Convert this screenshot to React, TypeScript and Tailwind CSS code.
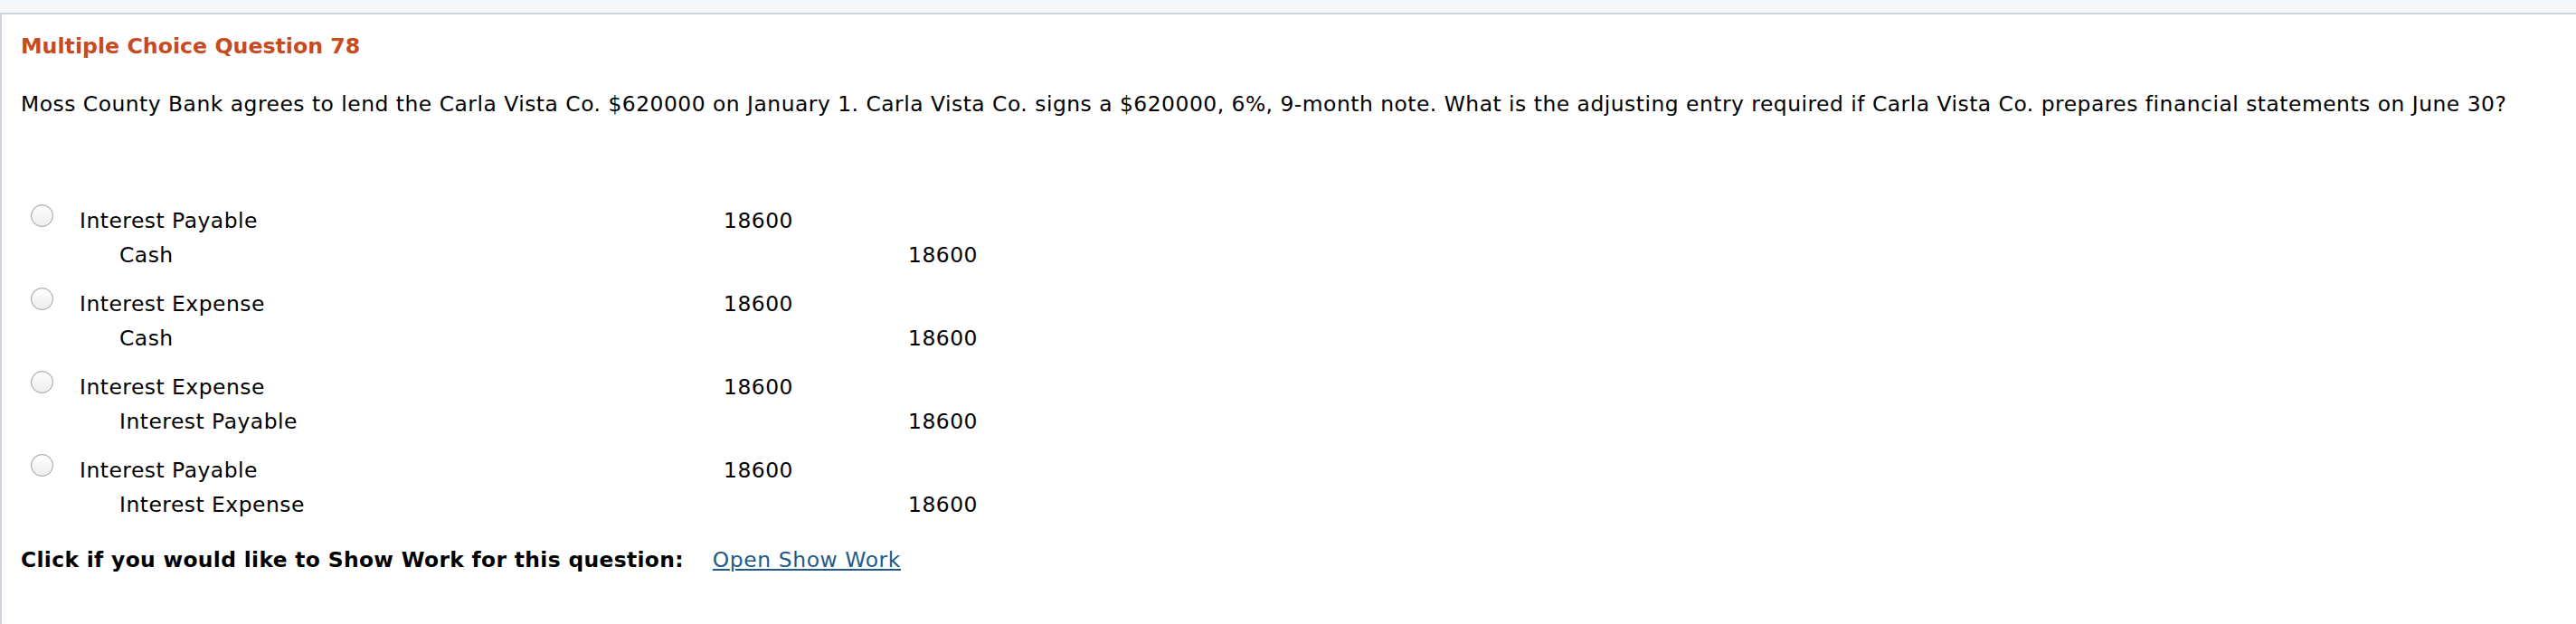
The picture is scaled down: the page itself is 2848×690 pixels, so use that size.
import React from 'react';

const options = [
  { debit: 'Interest Payable', credit: 'Cash' },
  { debit: 'Interest Expense', credit: 'Cash' },
  { debit: 'Interest Expense', credit: 'Interest Payable' },
  { debit: 'Interest Payable', credit: 'Interest Expense' },
];

function Radio() {
  return (
    <span className="block w-[25px] h-[25px] rounded-full border border-[#9f9f9f] bg-gradient-to-b from-white to-[#ececec] shadow-[inset_0_1px_1px_rgba(0,0,0,0.08)]" />
  );
}

export default function App() {
  return (
    <div className="min-h-[690px] bg-white text-black font-['DejaVu_Sans',Verdana,sans-serif]">
      <div className="h-[16px] bg-[#f6f7f9] border-b-2 border-[#ccd4df]" />
      <div className="border-l-2 border-[#ccd4df] pl-[21px] pt-[20px] min-h-[674px]">
        <h2 className="text-[23.7px] leading-[30px] font-bold text-[#c84b1f]">Multiple Choice Question 78</h2>

        <p className="mt-[30px] text-[23.4px] leading-[38px] tracking-[0.5px]">
          Moss County Bank agrees to lend the Carla Vista Co. $620000 on January 1. Carla Vista Co. signs a $620000, 6%, 9-month note. What is the adjusting entry required if Carla Vista Co. prepares financial statements on June 30?
        </p>

        <div className="mt-[91px] flex flex-col gap-[16px] text-[23.4px] leading-[38px] tracking-[0.5px]">
          {options.map((o, i) => (
            <div key={i} className="flex items-start">
              <div className="ml-[11px] w-[54px] pt-[1px]">
                <Radio />
              </div>
              <div>
                <div className="flex">
                  <span className="w-[689px]">{o.debit}</span>
                  <span className="w-[100px] text-right">18600</span>
                </div>
                <div className="flex">
                  <span className="w-[689px] pl-[44px]">{o.credit}</span>
                  <span className="w-[100px]" />
                  <span className="w-[204px] text-right">18600</span>
                </div>
              </div>
            </div>
          ))}
        </div>

        <div className="mt-[23px] flex text-[23.4px] leading-[38px]">
          <span className="font-bold tracking-[0.33px]">Click if you would like to Show Work for this question:</span>
          <a href="#" className="ml-[32px] text-[#215a8a] underline tracking-[0.6px]">Open Show Work</a>
        </div>
      </div>
    </div>
  );
}
